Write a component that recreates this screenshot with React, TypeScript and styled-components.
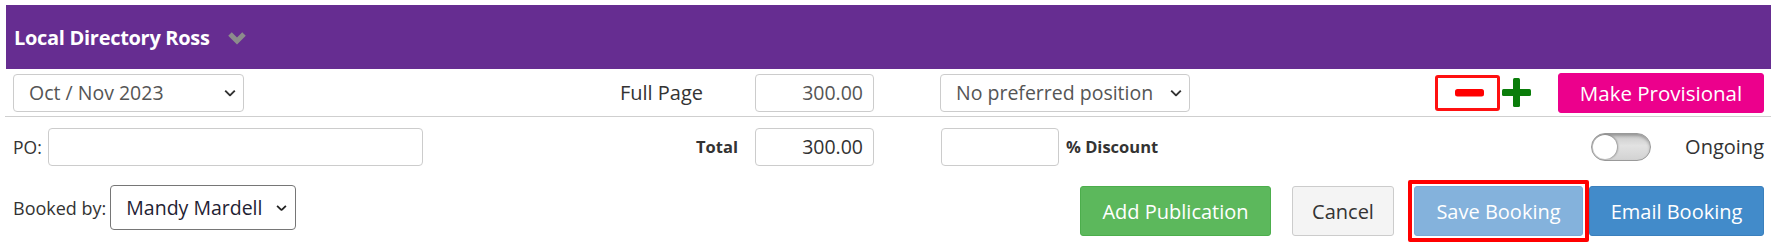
import * as React from 'react';
import styled, { createGlobalStyle } from 'styled-components';

const GlobalStyle = createGlobalStyle`
	html, body {
		margin: 0;
		padding: 0;
		background: #fff;
	}
	body {
		font-family: "Open Sans", "Liberation Sans", sans-serif;
		color: #333;
	}
`;

const Page = styled.div`
	padding: 5px 9px 0 5px;
	width: 1766px;
`;

const Header = styled.div`
	display: flex;
	align-items: center;
	height: 64px;
	margin-left: 1px;
	padding-left: 8px;
	background: #662d91;
	h2 {
		margin: 0;
		font-size: 20px;
		font-weight: 700;
		color: #fff;
		letter-spacing: -0.3px;
	}
	svg {
		margin-left: 17px;
		margin-top: 1px;
	}
`;

const Row = styled.div<{ $height: number; $line?: boolean }>`
	display: grid;
	grid-template-columns: 555px 195px 119px 66px 250px 1fr;
	align-items: center;
	height: ${p => p.$height}px;
	border-bottom: ${p => (p.$line ? '1px solid #cfcfcf' : 'none')};
`;

const Cell = styled.div<{ $inset?: number }>`
	display: flex;
	align-items: center;
	justify-content: flex-start;
	padding-left: ${p => p.$inset || 0}px;
`;

const EndCell = styled.div<{ $inset: number }>`
	display: flex;
	justify-content: flex-end;
	padding-right: ${p => p.$inset}px;
`;

const RightGroup = styled.div<{ $gap: number }>`
	display: flex;
	align-items: center;
	justify-content: flex-end;
	gap: ${p => p.$gap}px;
	padding-right: 7px;
`;

const PlainLabel = styled.span<{ $size: number; $bold?: boolean }>`
	font-size: ${p => p.$size}px;
	font-weight: ${p => (p.$bold ? 700 : 400)};
	color: #333;
	white-space: nowrap;
`;

const FieldPair = styled.div<{ $gap: number }>`
	display: flex;
	align-items: center;
	gap: ${p => p.$gap}px;
`;

const SelectWrap = styled.div<{ $width: number; $height: number; $dark?: boolean }>`
	position: relative;
	width: ${p => p.$width}px;
	height: ${p => p.$height}px;
	select {
		appearance: none;
		-webkit-appearance: none;
		width: 100%;
		height: 100%;
		box-sizing: border-box;
		padding: 0 0 0 15px;
		border: 1px solid ${p => (p.$dark ? '#767676' : '#cccccc')};
		border-radius: 4px;
		background: #fff;
		font-family: "Open Sans", "Liberation Sans", sans-serif;
		font-size: 19.5px;
		color: ${p => (p.$dark ? '#1f2233' : '#555')};
	}
	svg {
		position: absolute;
		right: ${p => (p.$dark ? 9 : 8)}px;
		top: 50%;
		transform: translateY(-50%);
		pointer-events: none;
	}
`;

const TextInput = styled.input<{ $width: number; $dark?: boolean }>`
	box-sizing: border-box;
	width: ${p => p.$width}px;
	height: 38px;
	padding: 0 10px;
	border: 1px solid #cccccc;
	border-radius: 4px;
	font-family: "Open Sans", "Liberation Sans", sans-serif;
	font-size: 19.5px;
	text-align: right;
	color: ${p => (p.$dark ? '#333' : '#555')};
	outline: none;
`;

const IconBox = styled.div`
	display: flex;
	align-items: center;
	justify-content: center;
	box-sizing: border-box;
	width: 65px;
	height: 36px;
	border: 3px solid #ff1010;
	border-radius: 3px;
	padding-left: 4px;
`;

const Button = styled.button<{ $bg: string; $fg?: string; $border?: string; $width: number }>`
	box-sizing: border-box;
	width: ${p => p.$width}px;
	height: 50px;
	border: 1px solid ${p => p.$border || p.$bg};
	border-radius: 3px;
	background: ${p => p.$bg};
	color: ${p => p.$fg || '#fff'};
	font-family: "Open Sans", "Liberation Sans", sans-serif;
	font-size: 20px;
	padding: 0;
	cursor: pointer;
`;

const ProvisionalButton = styled(Button)`
	height: 40px;
	font-size: 20.5px;
	margin-left: 26px;
`;

const Toggle = styled.div`
	position: relative;
	box-sizing: border-box;
	width: 60px;
	height: 28px;
	margin-right: 3px;
	border-radius: 14px;
	border: 1px solid #9a9a9a;
	background: linear-gradient(180deg, #c9c9c9 0%, #e2e2e2 45%, #d2d2d2 100%);
	box-shadow: inset 0 2px 3px rgba(0, 0, 0, 0.25);
	&::after {
		content: '';
		position: absolute;
		left: 1px;
		top: 1px;
		width: 24px;
		height: 24px;
		border-radius: 50%;
		background: #fff;
		box-shadow: 1px 0 2px rgba(0, 0, 0, 0.35);
	}
`;

const BottomRow = styled.div`
	display: flex;
	justify-content: space-between;
	align-items: flex-start;
	padding: 9px 7px 0 8px;
	height: 64px;
`;

const Actions = styled.div`
	display: flex;
	align-items: flex-start;
	margin-top: -5px;
	& > button {
		margin-top: 6px;
	}
`;

const Highlight = styled.div`
	box-sizing: border-box;
	border: 4px solid #ff0000;
	border-radius: 2px;
	padding: 2px;
	background: #fff;
	margin-left: 14px;
`;

const Chevron = ({ color, size = 12 }: { color: string; size?: number }) => (
	<svg width={size} height={size * 0.6} viewBox="0 0 10 6">
		<polyline points="1,1 5,5 9,1" fill="none" stroke={color} strokeWidth="1.6" />
	</svg>
);

export default function App() {
	return (
		<Page>
			<GlobalStyle />
			<Header>
				<h2>Local Directory Ross</h2>
				<svg width="20" height="14" viewBox="0 0 20 14">
					<polyline points="3,3 10,10 17,3" fill="none" stroke="#8c8c8c" strokeWidth="5" />
				</svg>
			</Header>

			<Row $height={47} $line>
				<Cell $inset={8}>
					<SelectWrap $width={231} $height={38}>
						<select defaultValue="oct">
							<option value="oct">Oct / Nov 2023</option>
						</select>
						<Chevron color="#333" />
					</SelectWrap>
				</Cell>
				<EndCell $inset={52}>
					<PlainLabel $size={20}>Full Page</PlainLabel>
				</EndCell>
				<TextInput $width={119} defaultValue="300.00" />
				<div />
				<SelectWrap $width={250} $height={38}>
					<select defaultValue="none">
						<option value="none">No preferred position</option>
					</select>
					<Chevron color="#333" />
				</SelectWrap>
				<RightGroup $gap={0}>
					<IconBox>
						<svg width="29" height="8" viewBox="0 0 29 8">
							<rect x="0" y="0" width="29" height="7.5" rx="2.5" fill="#ff0000" />
						</svg>
					</IconBox>
					<svg width="30" height="29" viewBox="0 0 30 29" style={{ marginLeft: 2 }}>
						<rect x="11" y="0" width="7" height="29" rx="1.5" fill="#0a7d0a" />
						<rect x="0" y="11" width="29" height="7" rx="1.5" fill="#0a7d0a" />
					</svg>
					<ProvisionalButton $bg="#ec008c" $width={206}>
						Make Provisional
					</ProvisionalButton>
				</RightGroup>
			</Row>

			<Row $height={59}>
				<Cell $inset={8}>
					<FieldPair $gap={6}>
						<PlainLabel $size={17.5}>PO:</PlainLabel>
						<TextInput $width={375} defaultValue="" />
					</FieldPair>
				</Cell>
				<EndCell $inset={17}>
					<PlainLabel $size={16.5} $bold>Total</PlainLabel>
				</EndCell>
				<TextInput $width={119} $dark defaultValue="300.00" />
				<div />
				<FieldPair $gap={7}>
					<TextInput $width={118} defaultValue="" style={{ marginLeft: 1 }} />
					<PlainLabel $size={16.5} $bold>% Discount</PlainLabel>
				</FieldPair>
				<RightGroup $gap={31}>
					<Toggle />
					<PlainLabel $size={20}>Ongoing</PlainLabel>
				</RightGroup>
			</Row>

			<BottomRow>
				<FieldPair $gap={4}>
					<PlainLabel $size={18}>Booked by:</PlainLabel>
					<SelectWrap $width={186} $height={45} $dark>
						<select defaultValue="mandy">
							<option value="mandy">Mandy Mardell</option>
						</select>
						<Chevron color="#222" size={11} />
					</SelectWrap>
				</FieldPair>
				<Actions>
					<Button $bg="#5cb85c" $border="#4cae4c" $width={191}>
						Add Publication
					</Button>
					<Button $bg="#f4f4f4" $fg="#333" $border="#cccccc" $width={102} style={{ marginLeft: 21 }}>
						Cancel
					</Button>
					<Highlight>
						<Button $bg="#84b2dc" $border="#7aaad6" $width={169}>
							Save Booking
						</Button>
					</Highlight>
					<Button $bg="#428bca" $border="#3b80bd" $width={175}>
						Email Booking
					</Button>
				</Actions>
			</BottomRow>
		</Page>
	);
}
